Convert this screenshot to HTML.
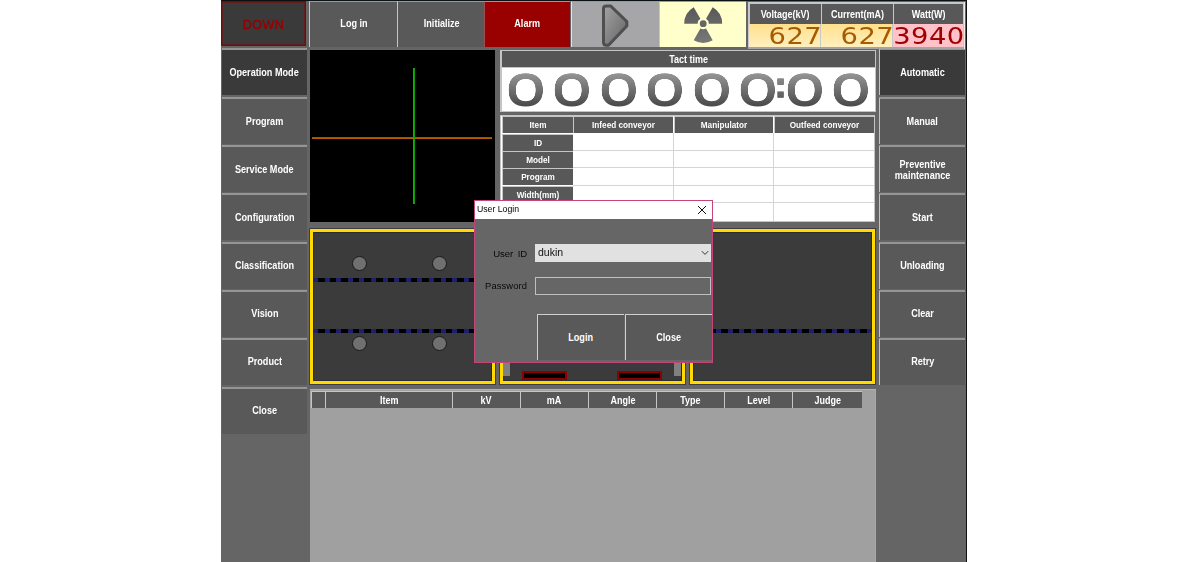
<!DOCTYPE html>
<html lang="en">
<head>
<meta charset="utf-8">
<title>User Login</title>
<style>
html,body{margin:0;padding:0;background:#fff;}
body{width:1200px;height:562px;position:relative;overflow:hidden;font-family:"Liberation Sans",sans-serif;font-size:10px;color:#fff;}
.a{position:absolute;box-sizing:border-box;}
#win{left:221px;top:0;width:746px;height:562px;background:#656565;border-top:1px solid #0a1216;border-right:1px solid #111;}
.btn{background:#595959;border-top:2px solid #959595;font-weight:bold;display:flex;align-items:center;justify-content:center;text-align:center;line-height:11px;}
.btn span{display:inline-block;position:relative;transform:scaleX(.91);white-space:nowrap;}
.sel{background:#3a3a3a;}
.lb{left:222px;width:85px;height:47px;}
.rb{left:879px;width:86px;height:47px;border-left:1px solid #c4c4c4;}
.tb{top:1px;height:46px;width:88px;border-top:1px solid #9a9a9a;border-left:1px solid #c6c6c6;}
.hc{font-size:10px;background:#585858;border-top:1px solid #c6c6c6;border-left:1px solid #c6c6c6;font-weight:bold;display:flex;align-items:center;justify-content:center;}
.hc span{display:inline-block;transform:scaleX(.9);white-space:nowrap;}

.seg{overflow:hidden;}
.seg span{position:absolute;right:-2px;top:-2px;display:inline-block;font-family:"DejaVu Sans","Liberation Sans",sans-serif;font-size:23.6px;line-height:28px;letter-spacing:.4px;transform:scaleX(1.16);transform-origin:100% 50%;white-space:nowrap;}
.cv{background:#3b3b3b;border:3px solid #ffd900;box-shadow:0 0 0 1px rgba(30,30,50,.55),inset 0 0 0 1px rgba(30,30,50,.5);}
.cv>.dash{left:0;right:0;height:4px;background:repeating-linear-gradient(90deg,#1f1f70 0,#1f1f70 5px,#000 5px,#000 11.6px);}
.circ{width:15px;height:15px;border-radius:50%;background:#707070;border:1px solid #1a1a1a;}
.lab{will-change:transform;color:#0a0a0a;font-size:9.4px;text-align:right;letter-spacing:.1px;}

.td{top:-5.5px;width:35.5px;height:56px;font-family:"DejaVu Sans","Liberation Sans",sans-serif;font-size:41px;line-height:56px;text-align:center;color:#4c4c4c;text-shadow:0 1px 0 #4c4c4c,0 -1px 0 #4c4c4c;transform:scaleX(1.63);transform-origin:50% 50%;}
.tc{width:15px;transform:none;text-shadow:none;font-size:35px;top:-11px;-webkit-text-stroke:1.4px #4c4c4c;font-family:"Liberation Sans",sans-serif;font-weight:bold;}
.t8{font-size:8.2px;}.t8 span{transform:none;}
.g10 span{transform:scaleX(.9);}
.tb span,.lo span{top:-1px;}
</style>
</head>
<body>
<div class="a" id="win"></div>

<!-- top row -->
<div class="a" id="down" style="left:221px;top:1px;width:85px;height:45px;background:#3a3a3a;border:1px solid #8b0000;box-shadow:inset 0 0 0 1px rgba(139,0,0,.5);color:#960000;-webkit-text-stroke:.4px #960000;letter-spacing:.5px;font-size:12.5px;display:flex;align-items:center;justify-content:center;padding-top:3px;">DOWN</div>
<div class="a btn tb" style="left:309px;"><span>Log in</span></div>
<div class="a btn tb" style="left:397px;"><span>Initialize</span></div>
<div class="a btn tb" style="left:484px;width:86px;background:#990000;border-left-color:#a05050;"><span>Alarm</span></div>
<div class="a btn tb" id="play" style="left:571px;border-left-color:#e4e4e4;background:#a6a5a8;"></div>
<div class="a btn tb" id="rad" style="left:659px;width:87px;background:#ffffcc;"></div>

<!-- left buttons -->
<div class="a btn lb sel" style="top:48px;"><span>Operation Mode</span></div>
<div class="a btn lb" style="top:97px;"><span>Program</span></div>
<div class="a btn lb" style="top:145px;"><span>Service Mode</span></div>
<div class="a btn lb" style="top:193px;"><span>Configuration</span></div>
<div class="a btn lb lo" style="top:242px;"><span>Classification</span></div>
<div class="a btn lb lo" style="top:290px;"><span>Vision</span></div>
<div class="a btn lb lo" style="top:338px;"><span>Product</span></div>
<div class="a btn lb lo" style="top:387px;"><span>Close</span></div>

<!-- right buttons -->
<div class="a btn rb sel" style="top:48px;"><span>Automatic</span></div>
<div class="a btn rb" style="top:97px;"><span>Manual</span></div>
<div class="a btn rb" style="top:145px;"><span>Preventive<br>maintenance</span></div>
<div class="a btn rb" style="top:193px;"><span>Start</span></div>
<div class="a btn rb lo" style="top:242px;"><span>Unloading</span></div>
<div class="a btn rb lo" style="top:290px;"><span>Clear</span></div>
<div class="a btn rb lo" style="top:338px;"><span>Retry</span></div>

<!-- black display -->
<div class="a" id="disp" style="left:310px;top:50px;width:185px;height:172px;background:#000;">
  <div class="a" style="left:2px;top:87px;width:180px;height:1px;background:#08a000;"></div>
  <div class="a" style="left:2px;top:88px;width:180px;height:1px;background:#b85c00;"></div>
  <div class="a" style="left:103px;top:18px;width:1px;height:136px;background:#b85c00;"></div>
  <div class="a" style="left:104px;top:18px;width:1px;height:136px;background:#08a000;"></div>
</div>


<!-- readout panel -->
<div class="a" style="left:748px;top:2px;width:217px;height:47px;background:linear-gradient(#c8c8c8 45px,#a4a4a4 45px);border-right:1px solid #ececec;"></div>
<div class="a hc" style="left:749px;top:3px;width:72px;height:21px;"><span>Voltage(kV)</span></div>
<div class="a hc" style="left:821px;top:3px;width:72px;height:21px;"><span>Current(mA)</span></div>
<div class="a hc" style="left:893px;top:3px;width:70px;height:21px;"><span>Watt(W)</span></div>
<div class="a seg" style="left:749px;top:24px;width:71px;height:23px;background:linear-gradient(#ffe08c,#fff0c0);color:#a85a00;"><span>627</span></div>
<div class="a seg" style="left:821px;top:24px;width:71px;height:23px;background:linear-gradient(#ffe08c,#fff0c0);color:#a85a00;"><span>627</span></div>
<div class="a seg" style="left:893px;top:24px;width:70px;height:23px;background:#ffc2c8;color:#a00000;"><span>3940</span></div>

<!-- tact time -->
<div class="a" style="left:500px;top:50px;width:376px;height:62px;background:#c4c4c4;"></div>
<div class="a" style="left:502px;top:51px;width:373px;height:16px;background:#555;font-weight:bold;display:flex;align-items:center;justify-content:center;"><span style="display:inline-block;transform:scaleX(.9)">Tact time</span></div>
<div class="a" id="tact" style="left:502px;top:68px;width:373px;height:43px;background:#fff;overflow:hidden;"><span class="a td" style="left:5.5px;">0</span><span class="a td" style="left:52.0px;">0</span><span class="a td" style="left:98.5px;">0</span><span class="a td" style="left:145.0px;">0</span><span class="a td" style="left:191.5px;">0</span><span class="a td" style="left:238.0px;">0</span><span class="a td" style="left:284.5px;">0</span><span class="a td" style="left:331.0px;">0</span><span class="a td tc" style="left:271px;">:</span><div class="a" style="left:0;top:0;width:373px;height:43px;mix-blend-mode:lighten;background:linear-gradient(#969696 5px,#4c4c4c 37px);"></div></div>

<!-- info table -->
<div class="a" id="tbl" style="left:500px;top:115px;width:375px;height:107px;background:#fff;border:1px solid #c4c4c4;"></div>
<div class="a hc t8" style="left:502px;top:116px;width:71px;height:17px;"><span>Item</span></div>
<div class="a hc t8" style="left:573px;top:116px;width:100px;height:17px;"><span>Infeed conveyor</span></div>
<div class="a hc t8" style="left:674px;top:116px;width:99px;height:17px;"><span>Manipulator</span></div>
<div class="a hc t8" style="left:774px;top:116px;width:100px;height:17px;"><span>Outfeed conveyor</span></div>
<div class="a hc t8" style="left:502px;top:134px;width:71px;height:17px;"><span>ID</span></div>
<div class="a hc t8" style="left:502px;top:151px;width:71px;height:17px;"><span>Model</span></div>
<div class="a hc t8" style="left:502px;top:168px;width:71px;height:17px;"><span>Program</span></div>
<div class="a hc t8" style="left:502px;top:186px;width:71px;height:17px;"><span>Width(mm)</span></div>
<div class="a hc t8" style="left:502px;top:203px;width:71px;height:17px;"><span></span></div>
<div class="a" style="left:573px;top:150px;width:301px;height:1px;background:#d4d4d4;"></div>
<div class="a" style="left:573px;top:167px;width:301px;height:1px;background:#d4d4d4;"></div>
<div class="a" style="left:573px;top:185px;width:301px;height:1px;background:#d4d4d4;"></div>
<div class="a" style="left:573px;top:202px;width:301px;height:1px;background:#d4d4d4;"></div>
<div class="a" style="left:673px;top:133px;width:1px;height:88px;background:#d4d4d4;"></div>
<div class="a" style="left:773px;top:133px;width:1px;height:88px;background:#d4d4d4;"></div>
<!-- conveyor panels -->
<div class="a cv" style="left:310px;top:229px;width:185px;height:155px;">
  <div class="a dash" style="top:46px;"></div>
  <div class="a dash" style="top:97px;"></div>
  <div class="a circ" style="left:39px;top:23.5px;"></div>
  <div class="a circ" style="left:119px;top:23.5px;"></div>
  <div class="a circ" style="left:39px;top:104px;"></div>
  <div class="a circ" style="left:119px;top:104px;"></div>
</div>
<div class="a cv" style="left:500px;top:229px;width:185px;height:155px;">
  <div class="a dash" style="top:46px;"></div>
  <div class="a dash" style="top:97px;"></div>
  <div class="a" style="left:0px;top:120px;width:7px;height:24px;background:#808080;"></div>
  <div class="a" style="left:171px;top:120px;width:7px;height:24px;background:#808080;"></div>
  <div class="a" style="left:19px;top:139px;width:45px;height:9px;background:#000;border:2px solid #8b0000;"></div>
  <div class="a" style="left:114px;top:139px;width:45px;height:9px;background:#000;border:2px solid #8b0000;"></div>
</div>
<div class="a cv" style="left:690px;top:229px;width:185px;height:155px;">
  <div class="a dash" style="top:97px;"></div>
</div>

<!-- result grid -->
<div class="a" style="left:310px;top:389px;width:566px;height:173px;background:#a0a0a0;border-top:1px solid #b2b2b2;border-right:1px solid #a9a9a9;"></div>
<div class="a hc g10" style="left:311px;top:391px;width:14px;height:17px;"></div>
<div class="a hc g10" style="left:325px;top:391px;width:127px;height:17px;"><span>Item</span></div>
<div class="a hc g10" style="left:452px;top:391px;width:68px;height:17px;"><span>kV</span></div>
<div class="a hc g10" style="left:520px;top:391px;width:68px;height:17px;"><span>mA</span></div>
<div class="a hc g10" style="left:588px;top:391px;width:68px;height:17px;"><span>Angle</span></div>
<div class="a hc g10" style="left:656px;top:391px;width:68px;height:17px;"><span>Type</span></div>
<div class="a hc g10" style="left:724px;top:391px;width:68px;height:17px;"><span>Level</span></div>
<div class="a hc g10" style="left:792px;top:391px;width:70px;height:17px;"><span>Judge</span></div>

<!-- login dialog -->
<div class="a" id="dlg" style="left:474px;top:200px;width:239px;height:163px;background:#666;border:1px solid #c8437a;">
  <div class="a" style="left:0;top:0;width:237px;height:18px;background:#fff;color:#000;font-size:8.7px;line-height:16px;padding-left:2px;will-change:transform;">User Login</div>
  <svg class="a" style="left:222px;top:4px;" width="10" height="10" viewBox="0 0 10 10"><path d="M1 1 L9 9 M9 1 L1 9" stroke="#111" stroke-width="1" fill="none"/></svg>
  <div class="a lab" style="left:0px;top:47px;width:52px;word-spacing:2.2px;letter-spacing:-.15px;font-size:9.6px;">User ID</div>
  <div class="a" style="left:60px;top:43px;width:176px;height:18px;background:#e1e1e1;color:#111;font-size:10.5px;line-height:17px;padding-left:3px;will-change:transform;">dukin</div>
  <svg class="a" style="left:226px;top:49px;" width="8" height="6" viewBox="0 0 8 6"><path d="M0.8 1.2 L4 4.4 L7.2 1.2" stroke="#333" stroke-width="1" fill="none"/></svg>
  <div class="a lab" style="left:0px;top:79px;width:52px;">Password</div>
  <div class="a" style="left:60px;top:76px;width:176px;height:18px;background:#666;border:1px solid #c0c0c0;"></div>
  <div class="a btn" style="left:62px;top:113px;width:87px;height:46px;border-top:1px solid #d0d0d0;border-left:1px solid #d0d0d0;"><span>Login</span></div>
  <div class="a btn" style="left:150px;top:113px;width:87px;height:46px;border-top:1px solid #d0d0d0;border-left:1px solid #d0d0d0;"><span>Close</span></div>
</div>
<svg class="a" style="left:571px;top:1px;" width="88" height="46" viewBox="571 1 88 46"><defs><linearGradient id="pg" x1="0" y1="0" x2="1" y2="1"><stop offset="0" stop-color="#a4a4a4"/><stop offset="1" stop-color="#626262"/></linearGradient></defs><path d="M603.5 8.5 Q603.5 5.9 606.5 5.9 L610.5 5.9 L626.8 21.5 L626.8 26 L608.5 45.2 L606.5 45.2 Q603.5 45.2 603.5 42.5 Z" fill="url(#pg)" stroke="#4f4f4f" stroke-width="3" stroke-linejoin="round"/></svg>
<svg class="a" style="left:659px;top:1px;" width="88" height="46" viewBox="0 0 88 46"><defs><linearGradient id="rg" x1="0" y1="0" x2="0" y2="1"><stop offset="0" stop-color="#585858"/><stop offset="1" stop-color="#787878"/></linearGradient></defs><path d="M49.80 22.70 L63.20 22.70 A19 19 0 0 0 53.70 6.25 L47.00 17.85 A5.6 5.6 0 0 1 49.80 22.70 Z M41.40 17.85 L34.70 6.25 A19 19 0 0 0 25.20 22.70 L38.60 22.70 A5.6 5.6 0 0 1 41.40 17.85 Z M41.40 27.55 L34.70 39.15 A19 19 0 0 0 53.70 39.15 L47.00 27.55 A5.6 5.6 0 0 1 41.40 27.55 Z" fill="url(#rg)"/><circle cx="44.20" cy="22.70" r="3.4" fill="#666"/></svg>
</body>
</html>
